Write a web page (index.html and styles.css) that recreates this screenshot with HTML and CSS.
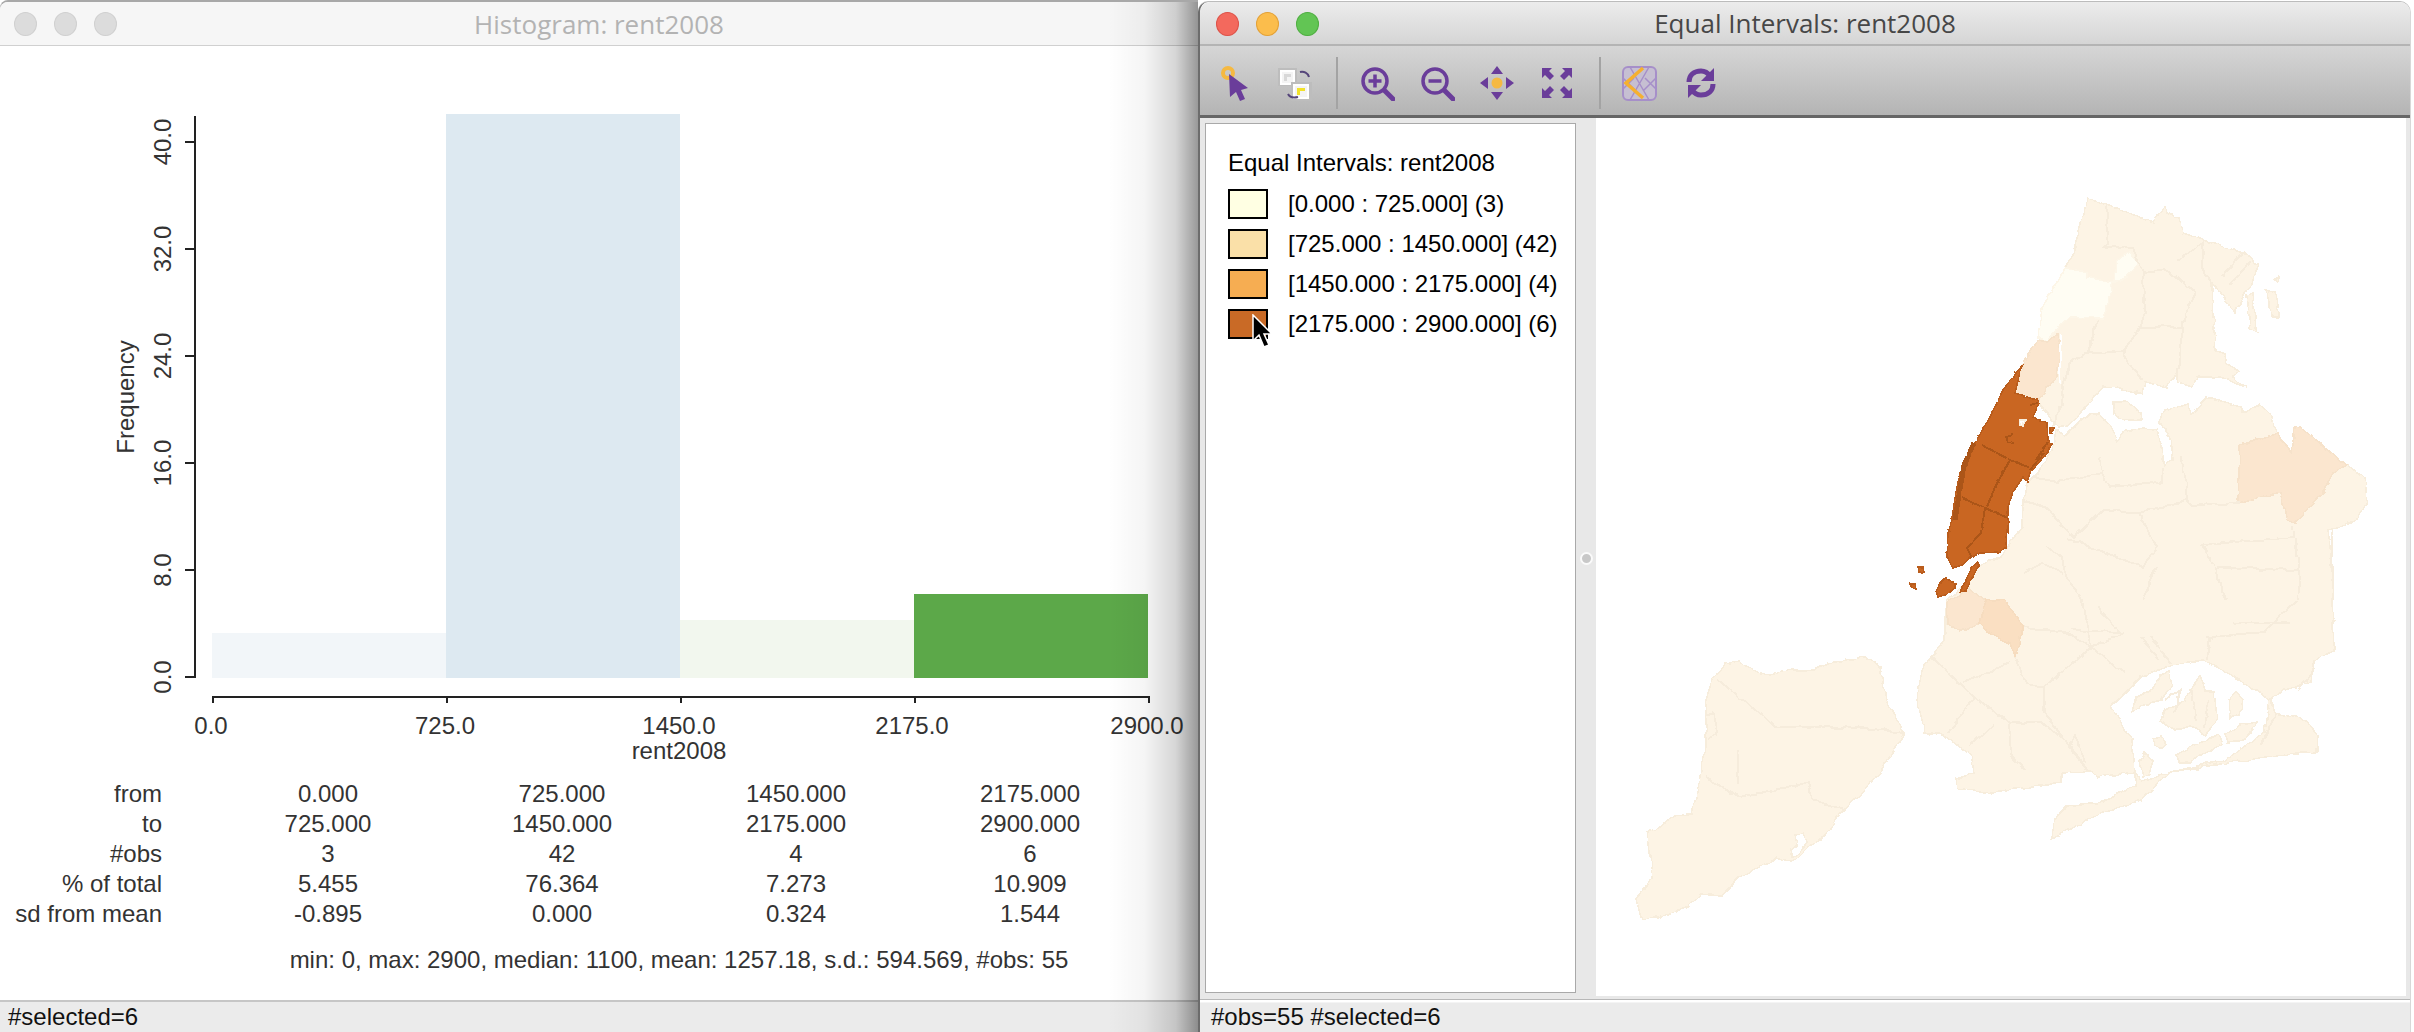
FILE: index.html
```html
<!DOCTYPE html>
<html lang="en">
<head>
  <meta charset="UTF-8" />
  <title>Histogram and Equal Intervals: rent2008</title>
  <link rel="stylesheet" href="styles.css">
</head>
<body>
  <!-- back window: histogram -->
  <section class="window window-back">
    <header class="titlebar titlebar-idle">
      <div class="lights">
        <span class="light"></span><span class="light"></span><span class="light"></span>
      </div>
      <div class="title title-idle">Histogram: rent2008</div>
    </header>

    <svg class="chart" viewBox="0 46 1198 732" width="1198" height="732">
      <rect class="bar-1" x="212" y="633" width="234" height="45" />
      <rect class="bar-2" x="446" y="114" width="234" height="564" />
      <rect class="bar-3" x="680" y="620" width="234" height="58" />
      <rect class="bar-4" x="914" y="594" width="234" height="84" />

      <path class="axis" d="M195 116V677H185M195 142H185M195 249H185M195 356H185M195 463H185M195 570H185" />
      <path class="axis" d="M213 703V697H1149V703M447 697V703M681 697V703M915 697V703" />

      <text class="tick" transform="rotate(-90 171 142)" x="171" y="142">40.0</text>
      <text class="tick" transform="rotate(-90 171 249)" x="171" y="249">32.0</text>
      <text class="tick" transform="rotate(-90 171 356)" x="171" y="356">24.0</text>
      <text class="tick" transform="rotate(-90 171 463)" x="171" y="463">16.0</text>
      <text class="tick" transform="rotate(-90 171 570)" x="171" y="570">8.0</text>
      <text class="tick" transform="rotate(-90 171 677)" x="171" y="677">0.0</text>
      <text class="tick" transform="rotate(-90 134 397)" x="134" y="397">Frequency</text>

      <text class="tick" x="211" y="734">0.0</text>
      <text class="tick" x="445" y="734">725.0</text>
      <text class="tick" x="679" y="734">1450.0</text>
      <text class="tick" x="912" y="734">2175.0</text>
      <text class="tick" x="1147" y="734">2900.0</text>
      <text class="tick" x="679" y="759">rent2008</text>
    </svg>

    <div class="bins">
      <div class="bin-label">from</div><div>0.000</div><div>725.000</div><div>1450.000</div><div>2175.000</div>
      <div class="bin-label">to</div><div>725.000</div><div>1450.000</div><div>2175.000</div><div>2900.000</div>
      <div class="bin-label">#obs</div><div>3</div><div>42</div><div>4</div><div>6</div>
      <div class="bin-label">% of total</div><div>5.455</div><div>76.364</div><div>7.273</div><div>10.909</div>
      <div class="bin-label">sd from mean</div><div>-0.895</div><div>0.000</div><div>0.324</div><div>1.544</div>
    </div>
    <div class="summary">min: 0, max: 2900, median: 1100, mean: 1257.18, s.d.: 594.569, #obs: 55</div>

    <footer class="statusbar">#selected=6</footer>
  </section>

  <!-- front window: map -->
  <section class="window window-front">
    <header class="titlebar">
      <div class="lights">
        <span class="light light-red"></span><span class="light light-yellow"></span><span class="light light-green"></span>
      </div>
      <div class="title">Equal Intervals: rent2008</div>
    </header>

    <div class="toolbar">
      <svg class="tool" viewBox="0 0 36 36">
        <circle class="stroke-yellow" cx="12" cy="8" r="5" />
        <path class="fill-purple" d="M13 9L32 23 25 25 29 34 24 36 20 27 14 32Z" />
      </svg>
      <svg class="tool" viewBox="0 0 36 36">
        <rect class="swap-shadow" x="2" y="3" width="19" height="18" />
        <rect class="swap-box" x="5" y="6" width="13" height="13" />
        <path class="swap-corner-grey" d="M8 16V9H15V12H11V16Z" />
        <rect class="swap-shadow" x="15" y="17" width="21" height="19" />
        <rect class="swap-box" x="18" y="20" width="14" height="13" />
        <path class="swap-corner-yellow" d="M21 30V23H29V26H24V30Z" />
        <path class="swap-arrow" d="M24 7C28 6 32 8 33 12M12 29C14 33 18 33 22 32" />
      </svg>
      <span class="tool-sep"></span>
      <svg class="tool" viewBox="0 0 36 36">
        <circle class="stroke-purple" cx="16" cy="16" r="12" />
        <path class="stroke-purple-fat" d="M26 26L34 34" />
        <path class="stroke-purple" d="M9.500 16H22.500M16 9.500V22.500" />
      </svg>
      <svg class="tool" viewBox="0 0 36 36">
        <circle class="stroke-purple" cx="16" cy="16" r="12" />
        <path class="stroke-purple-fat" d="M26 26L34 34" />
        <path class="stroke-purple" d="M9.500 16H22.500" />
      </svg>
      <svg class="tool" viewBox="0 0 36 36">
        <path class="fill-purple" d="M18 1L24 9H12ZM18 35L12 27H24ZM1 18L9 12V24ZM35 18L27 24V12Z" />
        <circle class="fill-yellow" cx="18" cy="18" r="5.500" />
      </svg>
      <svg class="tool" viewBox="0 0 36 36">
        <path class="fill-purple" d="M3 3H13L10 6 15 11 11 15 6 10 3 13Z" />
        <path class="fill-purple" d="M33 3H23L26 6 21 11 25 15 30 10 33 13Z" />
        <path class="fill-purple" d="M3 33H13L10 30 15 25 11 21 6 26 3 23Z" />
        <path class="fill-purple" d="M33 33H23L26 30 21 25 25 21 30 26 33 23Z" />
      </svg>
      <span class="tool-sep"></span>
      <svg class="tool" viewBox="0 0 36 36">
        <rect class="map-frame" x="1" y="2" width="33" height="33" rx="5" />
        <path class="map-lattice" d="M8 2L27 35M27 2L8 35M1 13L14 26M34 13L21 26M1 24L12 13M34 24L23 13" />
        <path class="map-yellow" d="M21 3L4 18 21 33" />
      </svg>
      <svg class="tool" viewBox="0 0 36 36">
        <path class="stroke-purple-fat stroke-butt" d="M7 17C7 10 12 6 19 6 23 6 26 8 28 11" />
        <path class="fill-purple" d="M32 3V16H19Z" />
        <path class="stroke-purple-fat stroke-butt" d="M31 19C31 26 26 30 19 30 15 30 12 28 10 25" />
        <path class="fill-purple" d="M6 33V20H19Z" />
      </svg>
    </div>

    <div class="panes">
      <aside class="legend">
        <div class="legend-title">Equal Intervals: rent2008</div>
        <div class="legend-row"><span class="swatch swatch-1"></span>[0.000 : 725.000] (3)</div>
        <div class="legend-row"><span class="swatch swatch-2"></span>[725.000 : 1450.000] (42)</div>
        <div class="legend-row"><span class="swatch swatch-3"></span>[1450.000 : 2175.000] (4)</div>
        <div class="legend-row">
          <span class="swatch swatch-4">
            <svg class="cursor" viewBox="0 0 22 36" width="22" height="36">
              <path d="M2 1V27L8 21 13 33 18 31 13 20H21Z" />
            </svg>
          </span>[2175.000 : 2900.000] (6)
        </div>
      </aside>
      <div class="sash"><span class="sash-dot"></span></div>
      <svg class="map" viewBox="1596 118 810 878" width="810" height="878">
        <defs>
          <filter id="rough" x="1596" y="118" width="810" height="878" filterUnits="userSpaceOnUse" color-interpolation-filters="sRGB">
            <feTurbulence type="fractalNoise" baseFrequency="0.09" numOctaves="2" seed="4" result="noise" />
            <feDisplacementMap in="SourceGraphic" in2="noise" scale="6" xChannelSelector="R" yChannelSelector="G" />
          </filter>
          <filter id="rough-fine" x="1596" y="118" width="810" height="878" filterUnits="userSpaceOnUse" color-interpolation-filters="sRGB">
            <feTurbulence type="fractalNoise" baseFrequency="0.2" numOctaves="1" seed="9" result="noise" />
            <feDisplacementMap in="SourceGraphic" in2="noise" scale="3" xChannelSelector="R" yChannelSelector="G" />
          </filter>
        </defs>

        <g filter="url(#rough)">
          <!-- Staten Island -->
          <path class="land" d="M1725 665L1738 662 1756 670 1771 675 1792 670 1813 670 1828 663 1865 657 1880 667 1886 700 1904 733 1880 773 1844 810 1823 837 1808 847 1800 857 1792 862 1777 857 1740 877 1722 895 1701 893 1688 907 1657 918 1642 919 1636 900 1652 878 1648 833 1673 817 1691 813 1696 797 1706 747 1706 700 1712 680Z" />
          <path class="water" d="M1795 835L1803 834 1806 842 1799 854 1792 858 1790 850 1797 845Z" />
          <path class="land-line" d="M1717 680L1777 727 1865 728 1904 733M1706 777L1740 797 1808 783 1813 800 1844 810M1738 750V785M1705 715L1714 712 1716 735 1708 738" />

          <!-- Bronx -->
          <path class="land" d="M2088 198L2107 205 2153 222 2158 215 2165 207 2167 212 2180 218 2183 233 2203 240 2243 253 2258 265 2253 277 2245 293 2235 313 2230 305 2217 288 2212 283 2213 313 2215 350 2225 353 2228 365 2238 370 2233 377 2247 387 2220 377 2197 377 2193 387 2177 383 2177 372 2167 388 2145 382 2142 393 2117 388 2103 387 2093 400 2078 417 2067 426 2058 428 2040 405 2023 365 2037 343 2040 333 2042 308 2065 268 2073 253Z" />
          <path class="land" d="M2247 295L2253 293 2255 320 2258 332 2250 327ZM2265 290L2275 293 2278 303 2277 318 2271 317 2270 303ZM2274 279L2279 277 2278 281Z" />
          <path class="land" d="M2113 402L2125 402 2140 412 2141 420 2125 420 2114 414Z" />
          <path class="pale" d="M2065 268L2087 272 2087 277 2113 283 2103 318 2070 317 2057 327 2047 342 2038 337 2042 308ZM2117 260L2130 252 2140 263 2127 277 2115 283Z" />
          <path class="peach" d="M2038 340L2047 342 2057 335 2060 353 2057 377 2047 388 2038 400 2013 393 2023 365Z" />
          <path class="land-line" d="M2107 205L2108 243 2103 247 2133 248 2143 273 2145 313 2140 327 2127 347 2123 353 2133 370 2143 380M2143 273L2167 270 2195 292 2187 310 2183 327 2140 327M2183 327L2180 363 2177 373M2177 260L2203 243 2203 270 2213 283M2098 320L2087 353 2070 363 2063 387 2060 407 2053 427M2087 353L2123 352M2223 276L2243 253M2230 285L2250 262" />
          <path class="water-line" d="M2060 335V385" />

          <!-- Queens and Brooklyn -->
          <path class="land" d="M2056 431L2065 436 2078 423 2090 413 2100 413 2110 425 2117 440 2123 432 2143 427 2157 430 2163 447 2162 458 2165 465 2172 460 2170 437 2160 423 2165 410 2187 403 2192 415 2207 397 2243 407 2243 413 2260 405 2270 413 2273 425 2283 443 2292 452 2295 428 2300 427 2347 465 2365 478 2367 502 2357 520 2328 530 2333 573 2332 600 2334 652 2314 660 2311 682 2285 690 2272 700 2275 713 2306 720 2318 737 2317 752 2265 757 2171 772 2140 800 2093 817 2052 838 2054 820 2067 807 2104 802 2135 785 2135 772 2098 777 2091 772 2062 773 2062 783 1984 793 1958 788 1956 778 1974 772 1971 755 1943 735 1925 732 1917 700 1922 670 1932 657 1945 640 1945 620 1947 600 1967 583 1980 563 2002 557 2010 543 2022 527 2023 500 2027 483 2037 473 2052 450Z" />
          <path class="water" d="M2202 660L2171 665 2140 678 2111 707 2132 740 2135 772 2142 782 2171 772 2225 760 2265 732 2270 700 2240 680Z" />
          <path class="peach" d="M2240 445L2278 433 2283 443 2292 452 2295 428 2300 427 2347 465 2333 473 2322 493 2295 523 2287 520 2280 492 2238 503Z" />
          <path class="peach" d="M1947 603L1968 588 1985 600 2005 600 2023 627 2020 643 2015 657 2010 643 1987 632 1979 623 1961 632 1947 625Z" />
          <path class="peach-deep" d="M1979 623L1987 600 2005 600 2023 627 2020 643 2015 657 2010 643 1987 632Z" />
          <path class="land" d="M2132 712L2136 697 2150 690 2160 675 2170 672 2173 685 2160 700 2145 705ZM2160 720L2165 710 2185 700 2200 675 2205 690 2215 690 2218 720 2205 735 2190 725 2175 730ZM2228 700L2236 693 2243 700 2240 715 2230 718ZM2152 738L2160 736 2166 745 2162 749 2155 746ZM2176 755L2195 745 2218 735 2222 745 2200 755 2190 763 2180 763ZM2140 762L2145 753 2152 760 2148 775 2143 777ZM2225 735L2240 725 2258 722 2245 740 2228 742Z" />
          <path class="land-line" d="M2100 457L2103 473 2057 482 2033 477M2103 473L2110 487 2160 483 2163 467M2183 457L2187 500 2138 513 2103 510 2073 537 2047 508 2023 500M2187 500L2193 505 2240 503M2138 513L2157 547 2143 567 2067 538M2202 545L2293 537M2293 527L2300 573 2298 600M2202 545L2217 570 2225 600M2217 567L2300 570M2332 530L2333 600M2157 567L2143 600M2047 547L2063 557 2067 580 2083 600M2023 573L2043 563 2063 573M2083 600L2091 647M1932 657L1963 687 1974 697 1948 733M1963 683L2010 663M1974 697L2010 723 2010 753 2026 770M2010 723L2041 722 2065 740 2088 772M2015 657L2026 683 2044 687 2044 713 2065 740M2044 687L2091 647 2124 633M2091 647L2124 673M2023 627L2067 633 2091 647M2070 630L2119 632 2098 607M2150 637L2171 663M2207 637L2265 632 2296 600M2233 623L2290 623M2210 637L2207 660M2140 637L2160 660M2298 690L2311 675 2314 660M1994 725L1970 745M2088 772L2070 745 2075 735 2085 762M2262 745L2275 713M2165 700L2180 690 2175 712M2190 690L2197 720M2208 700L2204 728" />
        </g>

        <!-- Manhattan and the harbour islands -->
        <g filter="url(#rough-fine)">
          <path class="selected" d="M2023 364L2020 372 2015 393 2027 397 2037 400 2039 403 2033 417 2047 423 2048 440 2052 443 2047 453 2030 473 2027 482 2023 477 2013 492 2008 507 2008 533 2005 548 2000 552 1980 553 1970 558 1962 565 1953 568 1947 557 1948 533 1952 520 1955 497 1960 473 1967 463 1975 443 1990 417 2003 390Z" />
          <path class="selected" d="M1945 578L1955 583 1955 588 1945 595 1938 597 1936 592 1940 583ZM1918 567L1923 567 1924 572 1919 572ZM1910 584L1915 584 1916 589 1912 588ZM1977 563L1972 567 1967 578 1960 592 1966 591 1971 580 1979 565ZM2050 428L2054 428 2052 434 2050 433Z" />
          <path class="selected-line" d="M1982 445L2010 460 2028 467M2010 460L1995 487 1987 507M1962 498L1985 508 2008 518M1985 508L1981 533 1967 548 1972 558M2037 403L2030 405M2044 453L2030 470M2048 442L2036 460M2013 435L2006 437 2008 442 2014 443" />
          <path class="selected-strip" d="M1974 443L1964 465 1959 495 1955 520" />
          <path class="water" d="M2020 420L2025 420 2023 426 2020 425Z" />
        </g>
      </svg>
    </div>

    <footer class="statusbar statusbar-front">#obs=55 #selected=6</footer>
  </section>
</body>
</html>
```

FILE: styles.css
```css
* {
  box-sizing: border-box;
  margin: 0;
  padding: 0;
}

body {
  position: relative;
  width: 2414px;
  height: 1032px;
  overflow: hidden;
  background: #fff;
  font-family: "Liberation Sans", Arial, sans-serif;
  font-size: 24px;
  color: #333;
}

.window {
  position: absolute;
  top: 2px;
  height: 1030px;
  display: flex;
  flex-direction: column;
  background: #fff;
}

.window-back {
  left: 0;
  width: 1198px;
  border-radius: 8px 0 0 0;
  box-shadow: 0 -2px 0 #a8a8a8;
}

.window-front {
  left: 1198px;
  width: 1212px;
  border-left: 2px solid #6c6c6c;
  border-radius: 10px 10px 0 0;
  box-shadow: 0 -1px 0 #bcbcbc, 1px 0 0 #d8d8d8;
}

/* shadow falling on the histogram */
.window-front:before {
  content: "";
  position: absolute;
  top: 0;
  bottom: 0;
  left: -92px;
  width: 90px;
  background: linear-gradient(to right, rgba(0, 0, 0, 0), rgba(0, 0, 0, 0.04) 40%, rgba(0, 0, 0, 0.16) 75%, rgba(0, 0, 0, 0.4));
}

.titlebar {
  position: relative;
  flex: none;
  height: 44px;
  display: flex;
  align-items: center;
  justify-content: center;
  background: linear-gradient(#ececec, #d5d5d5);
  border-bottom: 2px solid #b4b4b4;
  border-radius: 10px 10px 0 0;
}

.titlebar-idle {
  background: #f6f6f6;
  border-bottom: 1px solid #d0d0d0;
  border-radius: 8px 0 0 0;
}

.lights {
  position: absolute;
  left: 14px;
  top: 10px;
  display: flex;
  gap: 17px;
}

.window-front .lights {
  left: 16px;
}

.light {
  width: 23px;
  height: 24px;
  border-radius: 50%;
  background: #dcdcdc;
  border: 1px solid #d0d0d0;
}

.light-red {
  background: #f3695d;
  border-color: #dd5248;
}

.light-yellow {
  background: #fbbd4c;
  border-color: #e3a137;
}

.light-green {
  background: #62c554;
  border-color: #4fae41;
}

.title {
  font-family: "Open Sans", sans-serif;
  font-size: 26px;
  color: #474747;
}

.title-idle {
  color: #b3b3b3;
}

/* histogram */
.chart {
  display: block;
  flex: none;
}

.bar-1 { fill: #f2f6f9; }
.bar-2 { fill: #dde9f1; }
.bar-3 { fill: #f2f7ee; }
.bar-4 { fill: #5ca849; }

.axis {
  fill: none;
  stroke: #222;
  stroke-width: 2;
}

.tick {
  font-size: 24px;
  fill: #333;
  text-anchor: middle;
}

.bins {
  display: grid;
  grid-template-columns: 211px repeat(4, 234px);
  grid-auto-rows: 30px;
  margin-top: 1px;
  line-height: 30px;
  text-align: center;
}

.bin-label {
  padding-right: 49px;
  text-align: right;
}

.summary {
  width: 936px;
  margin: 16px 0 0 211px;
  line-height: 30px;
  text-align: center;
  white-space: nowrap;
}

.statusbar {
  margin-top: auto;
  flex: none;
  height: 32px;
  padding-left: 8px;
  background: #ebebeb;
  border-top: 2px solid #c6c6c6;
  line-height: 29px;
  color: #111;
}

.statusbar-front {
  height: 30px;
  padding-left: 11px;
  border-top: 1px solid #f4f4f4;
  line-height: 27px;
}

/* toolbar */
.toolbar {
  flex: none;
  height: 72px;
  display: flex;
  align-items: center;
  gap: 24px;
  padding: 4px 0 0 16px;
  background: linear-gradient(#d6d6d6, #b4b4b4);
  border-bottom: 3px solid #666;
}

.tool {
  flex: none;
  width: 36px;
  height: 36px;
}

.tool-sep {
  flex: none;
  width: 2px;
  height: 52px;
  margin-right: -3px;
  background: #a3a3a3;
}

.fill-purple { fill: #6a3d9a; }
.fill-yellow { fill: #f5b942; }

.stroke-yellow {
  fill: none;
  stroke: #f5b942;
  stroke-width: 4;
}

.stroke-purple {
  fill: none;
  stroke: #6a3d9a;
  stroke-width: 3.500;
}

.stroke-purple-fat {
  fill: none;
  stroke: #6a3d9a;
  stroke-width: 5;
  stroke-linecap: round;
}

.stroke-butt { stroke-linecap: butt; }

.swap-shadow { fill: #bdbdbd; }

.swap-box {
  fill: #f4f4f4;
  stroke: #fff;
  stroke-width: 2;
}

.swap-corner-grey { fill: #d8d8d8; }
.swap-corner-yellow { fill: #f2e22a; }

.swap-arrow {
  fill: none;
  stroke: #55457a;
  stroke-width: 2;
}

.map-frame {
  fill: #c6bfd2;
  stroke: #a68fc9;
  stroke-width: 2;
}

.map-lattice {
  fill: none;
  stroke: #a68fc9;
  stroke-width: 1.500;
}

.map-yellow {
  fill: none;
  stroke: #f5b030;
  stroke-width: 3.500;
}

/* map window body */
.panes {
  flex: none;
  height: 882px;
  display: flex;
  padding: 5px 4px 4px 5px;
  background: #e8e8e8;
  border-bottom: 1px solid #b8b8b8;
}

.legend {
  flex: none;
  width: 371px;
  height: 870px;
  padding: 25px 0 0 22px;
  background: #fff;
  border: 1px solid #a9a9a9;
  color: #000;
}

.legend-title {
  height: 28px;
  margin-bottom: 7px;
  line-height: 28px;
}

.legend-row {
  height: 40px;
  display: flex;
  align-items: center;
  white-space: nowrap;
}

.swatch {
  position: relative;
  flex: none;
  width: 40px;
  height: 30px;
  margin-right: 20px;
  border: 2px solid #000;
}

.swatch-1 { background: #ffffe3; }
.swatch-2 { background: #fae0a8; }
.swatch-3 { background: #f6ad52; }
.swatch-4 { background: #c96a26; }

.cursor {
  position: absolute;
  left: 21px;
  top: 3px;
  z-index: 2;
}

.cursor path {
  fill: #000;
  stroke: #fff;
  stroke-width: 1.500;
}

.sash {
  flex: none;
  width: 20px;
  margin-top: -1px;
  display: flex;
  align-items: center;
  justify-content: center;
}

.sash-dot {
  width: 13px;
  height: 13px;
  border-radius: 50%;
  background: #c8c8c8;
  border: 2px solid #fafafa;
}

.map {
  flex: none;
  display: block;
  margin-top: -5px;
  background: #fff;
  shape-rendering: crispEdges;
}

.land,
.pale,
.peach,
.peach-deep,
.selected,
.water {
  stroke-width: 1.500;
}

.land { fill: #fdf4e5; stroke: #f7eddc; }
.pale { fill: #fffdf3; stroke: #fdf6e8; }
.peach { fill: #fbe6cf; stroke: #f6e2ca; }
.peach-deep { fill: #fadfc2; stroke: #f6dcbf; }
.selected { fill: #c96622; stroke: #b95c1c; }
.water { fill: #fff; stroke: #f7eddc; }

.land-line {
  fill: none;
  stroke: #f6ecdc;
  stroke-width: 2;
}

.water-line {
  fill: none;
  stroke: #fff;
  stroke-width: 2;
}

.selected-line {
  fill: none;
  stroke: #ab5518;
  stroke-width: 2;
}

.selected-strip {
  fill: none;
  stroke: #ab5518;
  stroke-width: 5;
}
```
